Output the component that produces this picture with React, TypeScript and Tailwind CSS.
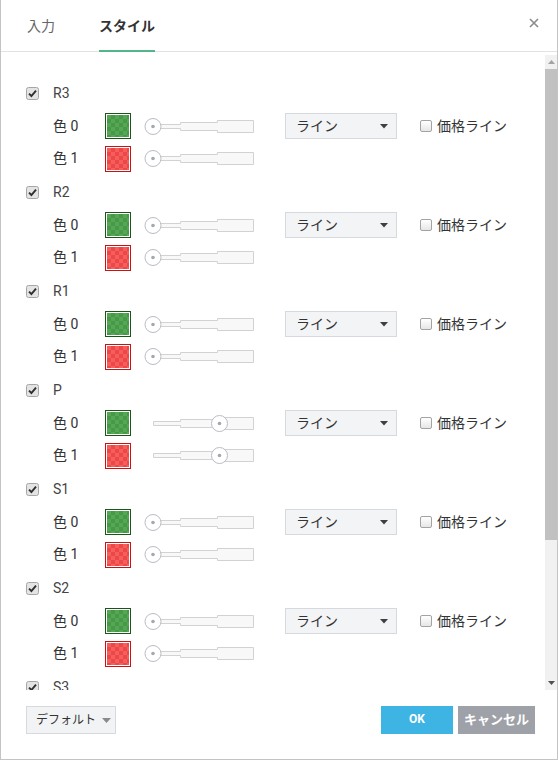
import { useId } from 'react';

type Group = { name: string; knob: number };

const groups: Group[] = [
  { name: 'R3', knob: 9 },
  { name: 'R2', knob: 9 },
  { name: 'R1', knob: 9 },
  { name: 'P', knob: 75.5 },
  { name: 'S1', knob: 9 },
  { name: 'S2', knob: 9 },
  { name: 'S3', knob: 9 },
];

function CheckedBox() {
  return (
    <svg width="13" height="13" viewBox="0 0 13 13" className="shrink-0">
      <rect x="0.5" y="0.5" width="12" height="12" rx="2" fill="#e4e4e4" stroke="#a6a6a6" />
      <path d="M3 6.6 L5.4 9 L10 3.6" fill="none" stroke="#2f2f2f" strokeWidth="1.9" />
    </svg>
  );
}

function EmptyBox() {
  return (
    <div className="w-[12px] h-[12px] shrink-0 rounded-[2px] border border-[#a3a3a3] bg-linear-to-b from-white to-[#e6e6e6]" />
  );
}

function Swatch({ red }: { red?: boolean }) {
  const id = useId();
  const border = red ? '#c41414' : '#1c541c';
  const a = red ? '#ef4646' : '#47994a';
  const b = red ? '#f35f5f' : '#55a754';
  return (
    <svg width="26" height="26" viewBox="0 0 26 26" className="shrink-0">
      <defs>
        <pattern id={id} width="8" height="8" patternUnits="userSpaceOnUse" x="2" y="2">
          <rect width="8" height="8" fill={a} />
          <rect width="4" height="4" fill={b} />
          <rect x="4" y="4" width="4" height="4" fill={b} />
        </pattern>
      </defs>
      <rect x="0.5" y="0.5" width="25" height="25" fill="#fff" stroke={border} />
      <rect x="2" y="2" width="22" height="22" fill={`url(#${id})`} />
    </svg>
  );
}

function WidthSlider({ knob }: { knob: number }) {
  return (
    <svg width="111" height="19" viewBox="0 0 111 19" className="shrink-0">
      <path
        d="M9.5 7.5 H36.5 V5.5 H73.5 V3.5 H109.5 V15.5 H73.5 V13.5 H36.5 V11.5 H9.5 Z"
        fill="#f8f8f8"
        stroke="#d2d2d2"
      />
      <circle cx={knob} cy="9.5" r="8" fill="#fff" stroke="#b9bcc5" />
      <circle cx={knob} cy="9.5" r="1.8" fill="#a3a7b0" />
    </svg>
  );
}

function ColorRow({ index, knob, withStyle }: { index: number; knob: number; withStyle?: boolean }) {
  return (
    <div className="flex items-center pl-[27px]" style={{ height: index === 0 ? 32 : 33 }}>
      <span className="w-[52px] text-[14px] text-[#333] whitespace-pre">色 {index}</span>
      <Swatch red={index === 1} />
      <div className="ml-[13px]">
        <WidthSlider knob={knob} />
      </div>
      {withStyle && (
        <>
          <div className="ml-[30px] w-[112px] h-[26px] flex items-center justify-between pl-[10px] pr-[8px] bg-[#f3f4f6] border border-[#d6d9de] text-[14px] text-[#333]">
            <span>ライン</span>
            <svg width="8" height="5" viewBox="0 0 8 5">
              <path d="M0 0 H8 L4 4.5 Z" fill="#3f3f3f" />
            </svg>
          </div>
          <div className="ml-[23px] flex items-center gap-[5px]">
            <EmptyBox />
            <span className="text-[14px] text-[#333]">価格ライン</span>
          </div>
        </>
      )}
    </div>
  );
}

export default function App() {
  return (
    <div className="w-[558px] h-[760px] flex flex-col bg-white border-x border-b border-[#c4c4c4] font-['Roboto','Noto_Sans_CJK_JP',sans-serif]">
      <div className="relative h-[52px] shrink-0 flex items-end gap-[44px] pl-[26px] border-b border-[#e2e2e2]">
        <div className="pb-[15px] leading-[20px] text-[14px] text-[#666]">入力</div>
        <div className="pb-[14px] -mb-px leading-[20px] text-[14px] font-bold text-[#333] border-b-2 border-[#52b68a]">
          スタイル
        </div>
        <svg width="10" height="10" viewBox="0 0 10 10" className="absolute right-[18px] top-[18px]">
          <path d="M1 1 L9 9 M9 1 L1 9" stroke="#8a8a8a" strokeWidth="1.6" />
        </svg>
      </div>

      <div className="flex-1 flex overflow-hidden">
        <div className="flex-1 overflow-hidden pt-[24px] pl-[25px]">
          {groups.map((g) => (
            <div key={g.name} className="flex flex-col">
              <div className="h-[34px] flex items-center">
                <CheckedBox />
                <span className="ml-[14px] text-[14px] text-[#444]">{g.name}</span>
              </div>
              <ColorRow index={0} knob={g.knob} withStyle />
              <ColorRow index={1} knob={g.knob} />
            </div>
          ))}
        </div>
        <div className="w-[12px] mt-[3px] flex flex-col bg-[#f1f1f1]">
          <div className="h-[14px] flex items-center justify-center">
            <svg width="7" height="4" viewBox="0 0 7 4">
              <path d="M0 4 H7 L3.5 0 Z" fill="#a3a3a3" />
            </svg>
          </div>
          <div className="h-[471px] bg-[#c1c1c1]" />
          <div className="flex-1 flex items-end justify-center pb-[5px]">
            <svg width="7" height="4" viewBox="0 0 7 4">
              <path d="M0 0 H7 L3.5 4 Z" fill="#505050" />
            </svg>
          </div>
        </div>
      </div>

      <div className="h-[69px] shrink-0 flex items-start justify-between pt-[16px] pl-[25px] pr-[22px]">
        <div className="w-[90px] h-[28px] flex items-center gap-[6px] pl-[9px] bg-[#f2f3f5] border border-[#d6d9de] text-[12px] text-[#333] whitespace-nowrap">
          <span>デフォルト</span>
          <svg width="9" height="5" viewBox="0 0 9 5" className="shrink-0">
            <path d="M0 0 H9 L4.5 5 Z" fill="#8a8a8a" />
          </svg>
        </div>
        <div className="flex gap-[5px]">
          <div className="w-[72px] h-[28px] flex items-center justify-center pb-[2px] bg-[#3db4e4] text-white text-[12px] font-bold">
            OK
          </div>
          <div className="w-[77px] h-[28px] flex items-center justify-center bg-[#9ea1a8] text-white text-[13px] font-bold whitespace-nowrap">
            キャンセル
          </div>
        </div>
      </div>
    </div>
  );
}
